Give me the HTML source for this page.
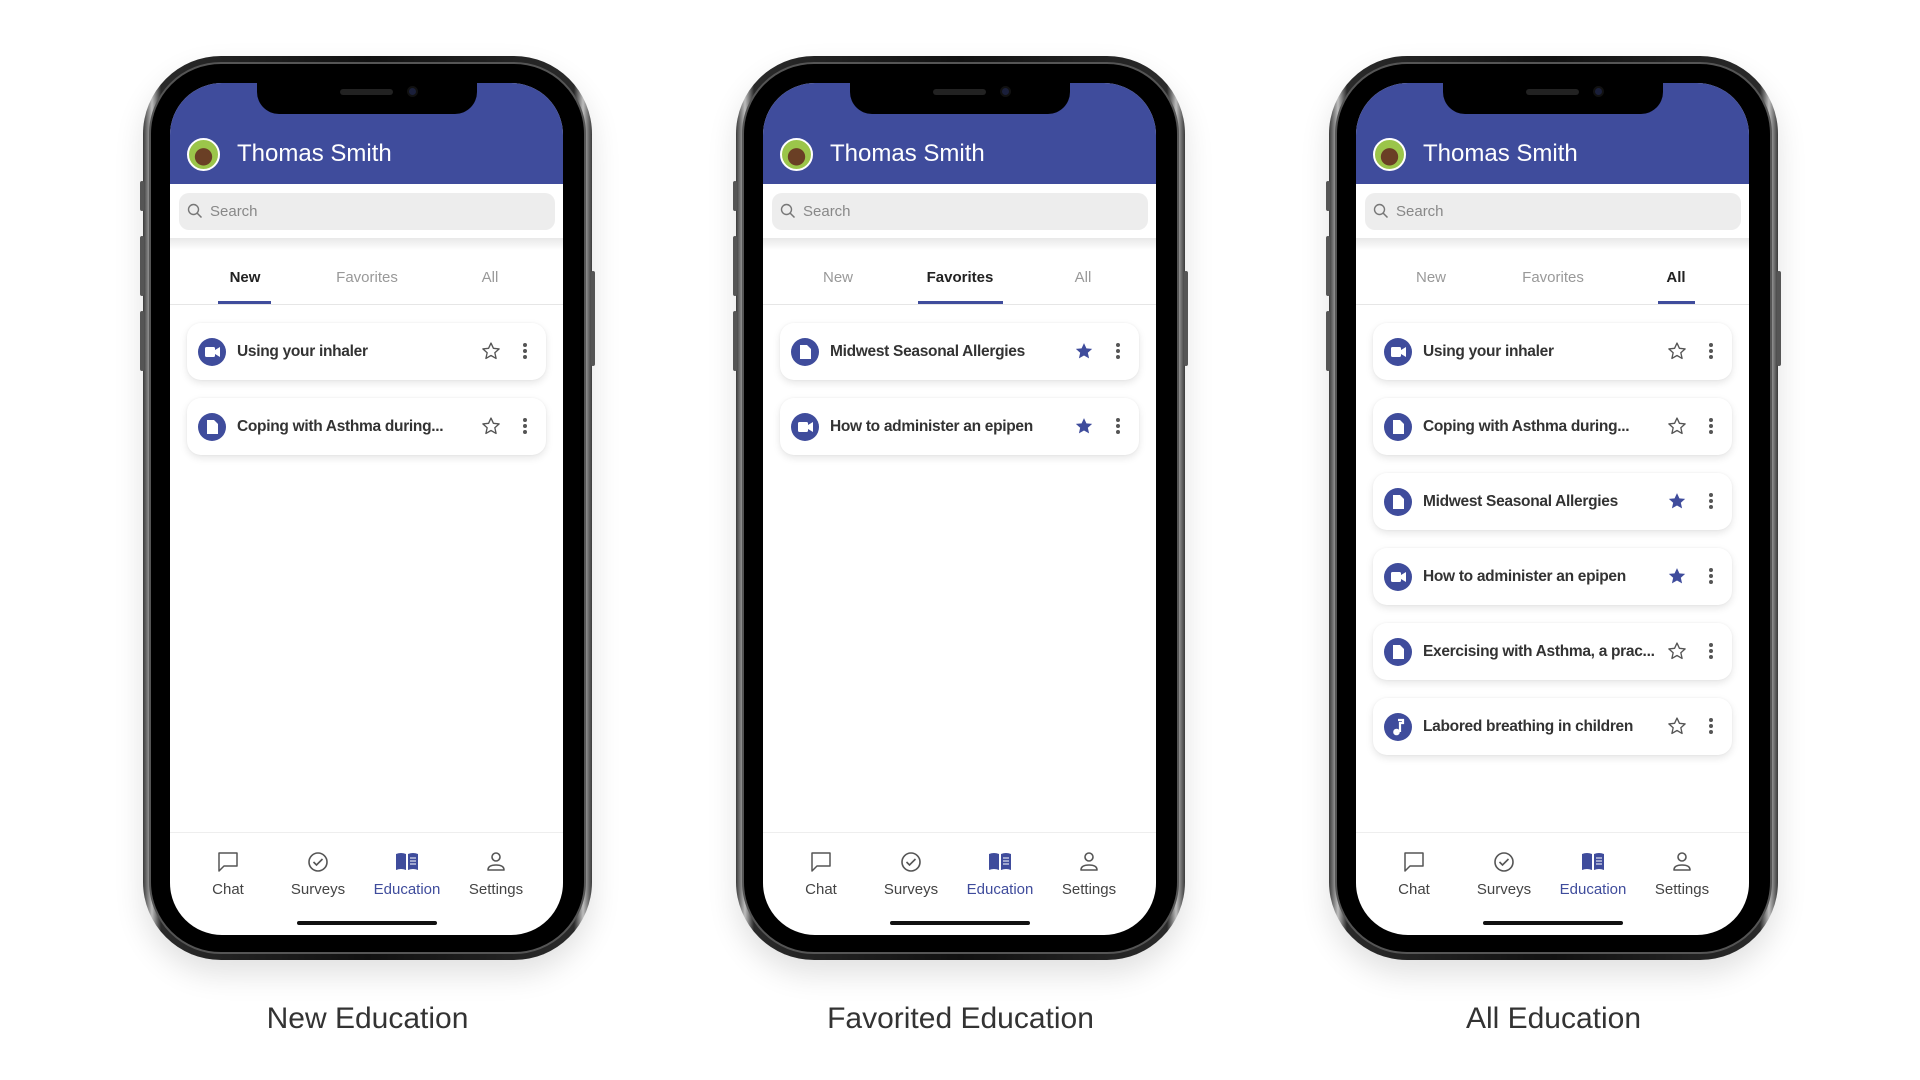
<!DOCTYPE html>
<html><head><meta charset="utf-8"><style>
*{margin:0;padding:0;box-sizing:border-box}
body{width:1920px;height:1080px;background:#fff;position:relative;overflow:hidden;font-family:"Liberation Sans",sans-serif}
.phone{position:absolute;top:56px;width:449px;height:904px;border-radius:78px;background:linear-gradient(90deg,#3a3a3a,#bdbdbd 2%,#2a2a2a 4%,#111 50%,#2a2a2a 96%,#bdbdbd 98%,#3a3a3a);box-shadow:0 14px 30px rgba(0,0,0,.12)}
.phone:before{content:"";position:absolute;left:6px;top:6px;right:6px;bottom:6px;border-radius:72px;background:#000;border:2px solid #555}
.btn{position:absolute;background:#555;border-radius:2px;width:4px}
.screen{position:absolute;left:27px;top:27px;width:393px;height:852px;border-radius:52px;background:#fff;overflow:hidden}
.hdr{position:absolute;left:0;top:0;width:393px;height:101px;background:#3f4c9c}
.notch{position:absolute;left:87px;top:0;width:220px;height:31px;background:#000;border-radius:0 0 22px 22px}
.spk{position:absolute;left:83px;top:6px;width:53px;height:6px;border-radius:3px;background:#222}
.cam{position:absolute;left:150px;top:3px;width:11px;height:11px;border-radius:50%;background:#1a1f3a;border:2px solid #111}
.av{position:absolute;left:17px;top:55px;width:33px;height:33px;border-radius:50%;background:radial-gradient(circle at 50% 58%,#6a3f25 0 38%,#9bc54a 40%);border:2px solid #fff}
.name{position:absolute;left:67px;top:57px;color:#fff;font-size:24px}
.search{position:absolute;left:9px;top:110px;width:376px;height:37px;border-radius:10px;background:#ededed}
.search span{position:absolute;left:31px;top:10px;font-size:15px;color:#888}
.sh{position:absolute;left:0;top:155px;width:393px;height:12px;background:linear-gradient(#e8e8e8,#fff)}
.tab{position:absolute;top:186px;font-size:15px;color:#999;transform:translateX(-50%)}
.tab.on{color:#222;font-weight:bold}
.ul{position:absolute;top:218px;height:3px;background:#3f4c9c}
.div{position:absolute;left:0;top:221px;width:393px;height:1px;background:#e6e6e6}
.card{position:absolute;left:17px;width:359px;height:57px;border-radius:14px;background:#fff;box-shadow:0 3px 8px rgba(0,0,0,.1),0 0 2px rgba(0,0,0,.05)}
.ic{position:absolute;left:11px;top:15px;width:28px;height:28px;border-radius:50%;background:#3f4c9c}
.ic svg{position:absolute;left:0;top:0}
.t{position:absolute;left:50px;top:20px;font-size:15.5px;color:#333;font-weight:bold;letter-spacing:-.3px;white-space:nowrap}
.star{position:absolute;left:294px;top:18px}
.dots{position:absolute;left:335px;top:18px}
.bdiv{position:absolute;left:0;top:749px;width:393px;height:1px;background:#eee}
.nav{position:absolute;top:768px;width:90px;transform:translateX(-50%);text-align:center;font-size:15px;color:#444}
.nav svg{display:block;margin:0 auto 8px}
.nav.on{color:#3f4c9c}
.home{position:absolute;left:127px;top:838px;width:140px;height:4px;border-radius:2px;background:#111}
.cap{position:absolute;top:1002px;width:449px;text-align:center;font-size:30px;color:#333}
</style></head><body>

<!-- PHONE 1 -->
<div class="phone" style="left:143px">
<div class="btn" style="left:-3px;top:125px;height:30px"></div><div class="btn" style="left:-3px;top:180px;height:60px"></div><div class="btn" style="left:-3px;top:255px;height:60px"></div><div class="btn" style="right:-3px;top:215px;height:95px"></div>
<div class="screen">
<div class="hdr"></div><div class="notch"><div class="spk"></div><div class="cam"></div></div>
<div class="av"></div><div class="name">Thomas Smith</div>
<div class="sh"></div>
<div class="search"><svg style="position:absolute;left:8px;top:10px" width="16" height="16" viewBox="0 0 16 16"><circle cx="6.5" cy="6.5" r="5" fill="none" stroke="#777" stroke-width="1.4"/><path d="M10 10l4.5 4.5" stroke="#777" stroke-width="1.5"/></svg><span>Search</span></div>
<div class="tab on" style="left:75px">New</div><div class="tab" style="left:197px">Favorites</div><div class="tab" style="left:320px">All</div>
<div class="ul" style="left:48px;width:53px"></div><div class="div"></div>
<div class="card" style="top:240px"><div class="ic"><svg width="28" height="28"><rect x="7" y="9" width="10" height="10" rx="1.5" fill="#fff"/><path d="M17 12l5-3v10l-5-3z" fill="#fff"/></svg></div><div class="t">Using your inhaler</div><svg class="star" width="20" height="20" viewBox="0 0 24 24"><path d="M12 2.5l2.9 6.3 6.9.7-5.2 4.6 1.5 6.8L12 17.4l-6.1 3.5 1.5-6.8L2.2 9.5l6.9-.7z" fill="none" stroke="#555" stroke-width="1.6" stroke-linejoin="round"/></svg><svg class="dots" width="6" height="20"><circle cx="3" cy="4" r="2" fill="#555"/><circle cx="3" cy="10" r="2" fill="#555"/><circle cx="3" cy="16" r="2" fill="#555"/></svg></div>
<div class="card" style="top:315px"><div class="ic"><svg width="28" height="28"><path d="M9 7h7l4 4v10H9z" fill="#fff"/></svg></div><div class="t">Coping with Asthma during...</div><svg class="star" width="20" height="20" viewBox="0 0 24 24"><path d="M12 2.5l2.9 6.3 6.9.7-5.2 4.6 1.5 6.8L12 17.4l-6.1 3.5 1.5-6.8L2.2 9.5l6.9-.7z" fill="none" stroke="#555" stroke-width="1.6" stroke-linejoin="round"/></svg><svg class="dots" width="6" height="20"><circle cx="3" cy="4" r="2" fill="#555"/><circle cx="3" cy="10" r="2" fill="#555"/><circle cx="3" cy="16" r="2" fill="#555"/></svg></div>
<div class="bdiv"></div>
<div class="nav" style="left:58px"><svg width="22" height="22" viewBox="0 0 22 22"><path d="M2 2h18v13H7l-5 5z" fill="none" stroke="#555" stroke-width="1.5" stroke-linejoin="round"/></svg>Chat</div>
<div class="nav" style="left:148px"><svg width="22" height="22" viewBox="0 0 22 22"><circle cx="11" cy="11" r="9" fill="none" stroke="#555" stroke-width="1.6"/><path d="M6.5 11l3 3 6-6" fill="none" stroke="#555" stroke-width="1.6"/></svg>Surveys</div>
<div class="nav on" style="left:237px"><svg width="24" height="22" viewBox="0 0 24 22"><path d="M1 3q5-2 10 0v16q-5-2-10 0z" fill="#3f4c9c"/><path d="M13 3q5-2 10 0v16q-5-2-10 0z" fill="#3f4c9c"/><path d="M15 7h6M15 10h6M15 13h6" stroke="#fff" stroke-width="1"/></svg>Education</div>
<div class="nav" style="left:326px"><svg width="22" height="22" viewBox="0 0 22 22"><circle cx="11" cy="6" r="4" fill="none" stroke="#555" stroke-width="1.6"/><path d="M3 19q0-5 8-5t8 5z" fill="none" stroke="#555" stroke-width="1.6" stroke-linejoin="round"/></svg>Settings</div>
<div class="home"></div>
</div></div>
<div class="cap" style="left:143px">New Education</div>

<!-- PHONE 2 -->
<div class="phone" style="left:736px">
<div class="btn" style="left:-3px;top:125px;height:30px"></div><div class="btn" style="left:-3px;top:180px;height:60px"></div><div class="btn" style="left:-3px;top:255px;height:60px"></div><div class="btn" style="right:-3px;top:215px;height:95px"></div>
<div class="screen">
<div class="hdr"></div><div class="notch"><div class="spk"></div><div class="cam"></div></div>
<div class="av"></div><div class="name">Thomas Smith</div>
<div class="sh"></div>
<div class="search"><svg style="position:absolute;left:8px;top:10px" width="16" height="16" viewBox="0 0 16 16"><circle cx="6.5" cy="6.5" r="5" fill="none" stroke="#777" stroke-width="1.4"/><path d="M10 10l4.5 4.5" stroke="#777" stroke-width="1.5"/></svg><span>Search</span></div>
<div class="tab" style="left:75px">New</div><div class="tab on" style="left:197px">Favorites</div><div class="tab" style="left:320px">All</div>
<div class="ul" style="left:155px;width:85px"></div><div class="div"></div>
<div class="card" style="top:240px"><div class="ic"><svg width="28" height="28"><path d="M9 7h7l4 4v10H9z" fill="#fff"/></svg></div><div class="t">Midwest Seasonal Allergies</div><svg class="star" width="20" height="20" viewBox="0 0 24 24"><path d="M12 2.5l2.9 6.3 6.9.7-5.2 4.6 1.5 6.8L12 17.4l-6.1 3.5 1.5-6.8L2.2 9.5l6.9-.7z" fill="#3f4c9c"/></svg><svg class="dots" width="6" height="20"><circle cx="3" cy="4" r="2" fill="#555"/><circle cx="3" cy="10" r="2" fill="#555"/><circle cx="3" cy="16" r="2" fill="#555"/></svg></div>
<div class="card" style="top:315px"><div class="ic"><svg width="28" height="28"><rect x="7" y="9" width="10" height="10" rx="1.5" fill="#fff"/><path d="M17 12l5-3v10l-5-3z" fill="#fff"/></svg></div><div class="t">How to administer an epipen</div><svg class="star" width="20" height="20" viewBox="0 0 24 24"><path d="M12 2.5l2.9 6.3 6.9.7-5.2 4.6 1.5 6.8L12 17.4l-6.1 3.5 1.5-6.8L2.2 9.5l6.9-.7z" fill="#3f4c9c"/></svg><svg class="dots" width="6" height="20"><circle cx="3" cy="4" r="2" fill="#555"/><circle cx="3" cy="10" r="2" fill="#555"/><circle cx="3" cy="16" r="2" fill="#555"/></svg></div>
<div class="bdiv"></div>
<div class="nav" style="left:58px"><svg width="22" height="22" viewBox="0 0 22 22"><path d="M2 2h18v13H7l-5 5z" fill="none" stroke="#555" stroke-width="1.5" stroke-linejoin="round"/></svg>Chat</div>
<div class="nav" style="left:148px"><svg width="22" height="22" viewBox="0 0 22 22"><circle cx="11" cy="11" r="9" fill="none" stroke="#555" stroke-width="1.6"/><path d="M6.5 11l3 3 6-6" fill="none" stroke="#555" stroke-width="1.6"/></svg>Surveys</div>
<div class="nav on" style="left:237px"><svg width="24" height="22" viewBox="0 0 24 22"><path d="M1 3q5-2 10 0v16q-5-2-10 0z" fill="#3f4c9c"/><path d="M13 3q5-2 10 0v16q-5-2-10 0z" fill="#3f4c9c"/><path d="M15 7h6M15 10h6M15 13h6" stroke="#fff" stroke-width="1"/></svg>Education</div>
<div class="nav" style="left:326px"><svg width="22" height="22" viewBox="0 0 22 22"><circle cx="11" cy="6" r="4" fill="none" stroke="#555" stroke-width="1.6"/><path d="M3 19q0-5 8-5t8 5z" fill="none" stroke="#555" stroke-width="1.6" stroke-linejoin="round"/></svg>Settings</div>
<div class="home"></div>
</div></div>
<div class="cap" style="left:736px">Favorited Education</div>

<!-- PHONE 3 -->
<div class="phone" style="left:1329px">
<div class="btn" style="left:-3px;top:125px;height:30px"></div><div class="btn" style="left:-3px;top:180px;height:60px"></div><div class="btn" style="left:-3px;top:255px;height:60px"></div><div class="btn" style="right:-3px;top:215px;height:95px"></div>
<div class="screen">
<div class="hdr"></div><div class="notch"><div class="spk"></div><div class="cam"></div></div>
<div class="av"></div><div class="name">Thomas Smith</div>
<div class="sh"></div>
<div class="search"><svg style="position:absolute;left:8px;top:10px" width="16" height="16" viewBox="0 0 16 16"><circle cx="6.5" cy="6.5" r="5" fill="none" stroke="#777" stroke-width="1.4"/><path d="M10 10l4.5 4.5" stroke="#777" stroke-width="1.5"/></svg><span>Search</span></div>
<div class="tab" style="left:75px">New</div><div class="tab" style="left:197px">Favorites</div><div class="tab on" style="left:320px">All</div>
<div class="ul" style="left:302px;width:37px"></div><div class="div"></div>
<div class="card" style="top:240px"><div class="ic"><svg width="28" height="28"><rect x="7" y="9" width="10" height="10" rx="1.5" fill="#fff"/><path d="M17 12l5-3v10l-5-3z" fill="#fff"/></svg></div><div class="t">Using your inhaler</div><svg class="star" width="20" height="20" viewBox="0 0 24 24"><path d="M12 2.5l2.9 6.3 6.9.7-5.2 4.6 1.5 6.8L12 17.4l-6.1 3.5 1.5-6.8L2.2 9.5l6.9-.7z" fill="none" stroke="#555" stroke-width="1.6" stroke-linejoin="round"/></svg><svg class="dots" width="6" height="20"><circle cx="3" cy="4" r="2" fill="#555"/><circle cx="3" cy="10" r="2" fill="#555"/><circle cx="3" cy="16" r="2" fill="#555"/></svg></div>
<div class="card" style="top:315px"><div class="ic"><svg width="28" height="28"><path d="M9 7h7l4 4v10H9z" fill="#fff"/></svg></div><div class="t">Coping with Asthma during...</div><svg class="star" width="20" height="20" viewBox="0 0 24 24"><path d="M12 2.5l2.9 6.3 6.9.7-5.2 4.6 1.5 6.8L12 17.4l-6.1 3.5 1.5-6.8L2.2 9.5l6.9-.7z" fill="none" stroke="#555" stroke-width="1.6" stroke-linejoin="round"/></svg><svg class="dots" width="6" height="20"><circle cx="3" cy="4" r="2" fill="#555"/><circle cx="3" cy="10" r="2" fill="#555"/><circle cx="3" cy="16" r="2" fill="#555"/></svg></div>
<div class="card" style="top:390px"><div class="ic"><svg width="28" height="28"><path d="M9 7h7l4 4v10H9z" fill="#fff"/></svg></div><div class="t">Midwest Seasonal Allergies</div><svg class="star" width="20" height="20" viewBox="0 0 24 24"><path d="M12 2.5l2.9 6.3 6.9.7-5.2 4.6 1.5 6.8L12 17.4l-6.1 3.5 1.5-6.8L2.2 9.5l6.9-.7z" fill="#3f4c9c"/></svg><svg class="dots" width="6" height="20"><circle cx="3" cy="4" r="2" fill="#555"/><circle cx="3" cy="10" r="2" fill="#555"/><circle cx="3" cy="16" r="2" fill="#555"/></svg></div>
<div class="card" style="top:465px"><div class="ic"><svg width="28" height="28"><rect x="7" y="9" width="10" height="10" rx="1.5" fill="#fff"/><path d="M17 12l5-3v10l-5-3z" fill="#fff"/></svg></div><div class="t">How to administer an epipen</div><svg class="star" width="20" height="20" viewBox="0 0 24 24"><path d="M12 2.5l2.9 6.3 6.9.7-5.2 4.6 1.5 6.8L12 17.4l-6.1 3.5 1.5-6.8L2.2 9.5l6.9-.7z" fill="#3f4c9c"/></svg><svg class="dots" width="6" height="20"><circle cx="3" cy="4" r="2" fill="#555"/><circle cx="3" cy="10" r="2" fill="#555"/><circle cx="3" cy="16" r="2" fill="#555"/></svg></div>
<div class="card" style="top:540px"><div class="ic"><svg width="28" height="28"><path d="M9 7h7l4 4v10H9z" fill="#fff"/></svg></div><div class="t">Exercising with Asthma, a prac...</div><svg class="star" width="20" height="20" viewBox="0 0 24 24"><path d="M12 2.5l2.9 6.3 6.9.7-5.2 4.6 1.5 6.8L12 17.4l-6.1 3.5 1.5-6.8L2.2 9.5l6.9-.7z" fill="none" stroke="#555" stroke-width="1.6" stroke-linejoin="round"/></svg><svg class="dots" width="6" height="20"><circle cx="3" cy="4" r="2" fill="#555"/><circle cx="3" cy="10" r="2" fill="#555"/><circle cx="3" cy="16" r="2" fill="#555"/></svg></div>
<div class="card" style="top:615px"><div class="ic"><svg width="28" height="28"><path d="M14 7h5v3h-3v9" fill="none" stroke="#fff" stroke-width="2.2"/><circle cx="12.5" cy="19" r="3.3" fill="#fff"/></svg></div><div class="t">Labored breathing in children</div><svg class="star" width="20" height="20" viewBox="0 0 24 24"><path d="M12 2.5l2.9 6.3 6.9.7-5.2 4.6 1.5 6.8L12 17.4l-6.1 3.5 1.5-6.8L2.2 9.5l6.9-.7z" fill="none" stroke="#555" stroke-width="1.6" stroke-linejoin="round"/></svg><svg class="dots" width="6" height="20"><circle cx="3" cy="4" r="2" fill="#555"/><circle cx="3" cy="10" r="2" fill="#555"/><circle cx="3" cy="16" r="2" fill="#555"/></svg></div>
<div class="bdiv"></div>
<div class="nav" style="left:58px"><svg width="22" height="22" viewBox="0 0 22 22"><path d="M2 2h18v13H7l-5 5z" fill="none" stroke="#555" stroke-width="1.5" stroke-linejoin="round"/></svg>Chat</div>
<div class="nav" style="left:148px"><svg width="22" height="22" viewBox="0 0 22 22"><circle cx="11" cy="11" r="9" fill="none" stroke="#555" stroke-width="1.6"/><path d="M6.5 11l3 3 6-6" fill="none" stroke="#555" stroke-width="1.6"/></svg>Surveys</div>
<div class="nav on" style="left:237px"><svg width="24" height="22" viewBox="0 0 24 22"><path d="M1 3q5-2 10 0v16q-5-2-10 0z" fill="#3f4c9c"/><path d="M13 3q5-2 10 0v16q-5-2-10 0z" fill="#3f4c9c"/><path d="M15 7h6M15 10h6M15 13h6" stroke="#fff" stroke-width="1"/></svg>Education</div>
<div class="nav" style="left:326px"><svg width="22" height="22" viewBox="0 0 22 22"><circle cx="11" cy="6" r="4" fill="none" stroke="#555" stroke-width="1.6"/><path d="M3 19q0-5 8-5t8 5z" fill="none" stroke="#555" stroke-width="1.6" stroke-linejoin="round"/></svg>Settings</div>
<div class="home"></div>
</div></div>
<div class="cap" style="left:1329px">All Education</div>
</body></html>
